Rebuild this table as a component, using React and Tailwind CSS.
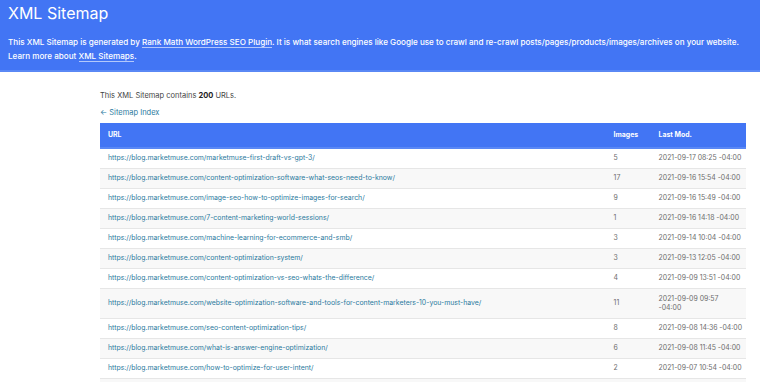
import React from "react";

const rows = [
  ["https://blog.marketmuse.com/marketmuse-first-draft-vs-gpt-3/", "5", "2021-09-17 08:25 -04:00"],
  ["https://blog.marketmuse.com/content-optimization-software-what-seos-need-to-know/", "17", "2021-09-16 15:54 -04:00"],
  ["https://blog.marketmuse.com/image-seo-how-to-optimize-images-for-search/", "9", "2021-09-16 15:49 -04:00"],
  ["https://blog.marketmuse.com/7-content-marketing-world-sessions/", "1", "2021-09-16 14:18 -04:00"],
  ["https://blog.marketmuse.com/machine-learning-for-ecommerce-and-smb/", "3", "2021-09-14 10:04 -04:00"],
  ["https://blog.marketmuse.com/content-optimization-system/", "3", "2021-09-13 12:05 -04:00"],
  ["https://blog.marketmuse.com/content-optimization-vs-seo-whats-the-difference/", "4", "2021-09-09 13:51 -04:00"],
  ["https://blog.marketmuse.com/website-optimization-software-and-tools-for-content-marketers-10-you-must-have/", "11", "2021-09-09 09:57 -04:00", true],
  ["https://blog.marketmuse.com/seo-content-optimization-tips/", "8", "2021-09-08 14:36 -04:00"],
  ["https://blog.marketmuse.com/what-is-answer-engine-optimization/", "6", "2021-09-08 11:45 -04:00"],
  ["https://blog.marketmuse.com/how-to-optimize-for-user-intent/", "2", "2021-09-07 10:54 -04:00"],
  ["https://blog.marketmuse.com/top-6-seo-content-optimization-ranking-highlights/", "1", "2021-09-01 15:15 -04:00"],
];

export default function App() {
  return (
    <div className="min-h-screen bg-white font-['Inter','Noto_Sans',sans-serif] text-[#444]">
      {/* Header */}
      <div className="bg-[#4275f4] border-b-2 border-[#5a88f5] px-2 pt-0 pb-[7px] text-white">
        <h1 className="text-[16px] leading-[26px] font-normal">XML Sitemap</h1>
        <p className="mt-[9px] text-[8.1px] leading-[14px] font-medium">
          This XML Sitemap is generated by{" "}
          <a className="border-b border-white/60">Rank Math WordPress SEO Plugin</a>. It is what search engines like
          Google use to crawl and re-crawl posts/pages/products/images/archives on your website.
          <br />
          Learn more about <a className="border-b border-white/60">XML Sitemaps</a>.
        </p>
      </div>

      {/* Content */}
      <div className="pl-[100px] pr-[14px] pt-[18px]">
        <p className="text-[7.5px] leading-[12px] text-[#444]">
          This XML Sitemap contains <strong className="font-bold text-[#222]">200</strong> URLs.
        </p>
        <a className="mt-[5px] block text-[7.5px] leading-[12px] text-[#2b7a9e]">← Sitemap Index</a>

        <table className="mt-[4px] w-full border-collapse text-[6.9px]">
          <thead>
            <tr className="bg-[#4275f4] text-white">
              <th className="h-[25px] border-b-2 border-[#5a88f5] pl-2 text-left font-bold">URL</th>
              <th className="w-[45px] border-b-2 border-[#5a88f5] pl-2 text-left font-bold">Images</th>
              <th className="w-[95px] border-b-2 border-[#5a88f5] pl-2 text-left font-bold">Last Mod.</th>
            </tr>
          </thead>
          <tbody>
            {rows.map(([url, images, date, wrap], i) => (
              <tr key={url} className={`border-b border-[#e6e6e6] ${i % 2 ? "bg-[#f8f8f8]" : "bg-white"}`}>
                <td className={`pl-2 text-[#2b7a9e] ${wrap ? "h-[30px]" : "h-[20px]"}`}>{url}</td>
                <td className="pl-2 text-[#6b6b6b]">{images}</td>
                <td className="pl-2 pr-1 text-[#6b6b6b]">
                  <div className={wrap ? "w-[66px] leading-[9px]" : "whitespace-nowrap"}>{date}</div>
                </td>
              </tr>
            ))}
          </tbody>
        </table>
      </div>
    </div>
  );
}
